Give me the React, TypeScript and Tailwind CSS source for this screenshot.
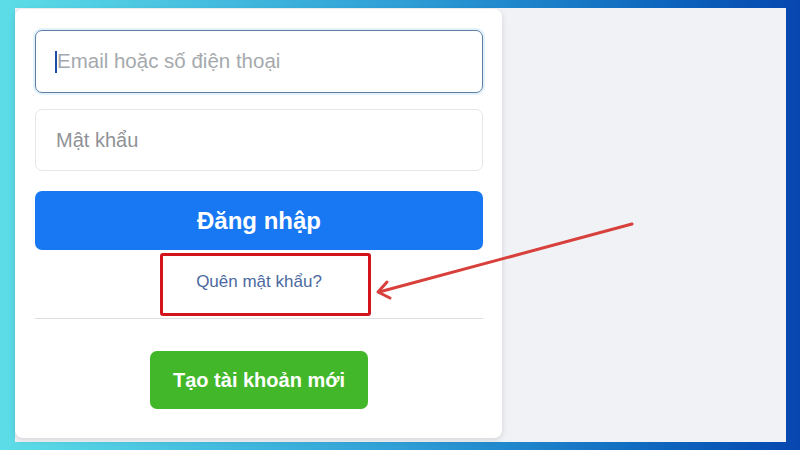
import React from 'react';

const font = { fontFamily: '"Liberation Sans", Arial, sans-serif' };

const LoginCard: React.FC = () => {
  return (
    <div className="relative w-[487px] mt-[1px] rounded-[8px] bg-white pt-[21px] pl-[20px] pr-[19px] shadow-[0_2px_6px_rgba(0,0,0,0.12)]">
      {/* Email input (focused) */}
      <div className="h-[63px] rounded-[7px] border border-[#5d7fa3] shadow-[0_0_0_2px_#e3f1fb] flex items-center pl-[19px]">
        <span className="w-[2px] h-[22px] bg-[#1d4ea3]" />
        <span className="text-[20.5px] text-[#a5a9ad]">Email hoặc số điện thoại</span>
      </div>

      {/* Password input */}
      <div className="mt-[16px] h-[62px] rounded-[7px] border border-[#e4e6e9] flex items-center pl-[20px]">
        <span className="text-[20px] text-[#8f9296]">Mật khẩu</span>
      </div>

      {/* Login button */}
      <button className="mt-[20px] w-full h-[59px] rounded-[7px] bg-[#1877f2] text-white text-[24px] font-bold">
        Đăng nhập
      </button>

      {/* Forgot password */}
      <div className="h-[68px] flex items-center justify-center pb-[4px]">
        <span className="text-[17px] text-[#4b69a0]">Quên mật khẩu?</span>
      </div>

      <div className="h-[1px] bg-[#dadde1]" />

      <div className="flex justify-center pt-[32px] pb-[29px]">
        <button className="w-[218px] h-[58px] rounded-[7px] bg-[#42b72a] text-white text-[20px] font-bold">
          Tạo tài khoản mới
        </button>
      </div>

      {/* annotation box */}
      <div className="absolute left-[145px] top-[244px] w-[211px] h-[63px] border-[3px] border-[#d3141d] rounded-[3px]" />
    </div>
  );
};

export default function App() {
  return (
    <div
      className="relative w-[800px] h-[450px] overflow-hidden bg-gradient-to-r from-[#5ddde7] via-[#2f9fd6] to-[#0846af] pl-[15px] pr-[14px] pt-[8px] pb-[8px]"
      style={font}
    >
      <div className="h-full bg-[#f0f2f5] flex items-start">
        <LoginCard />
      </div>

      {/* annotation arrow */}
      <svg className="absolute left-0 top-0" width="800" height="450" viewBox="0 0 800 450">
        <g stroke="#d8403c" strokeWidth="3" strokeLinecap="round" fill="none">
          <line x1="632" y1="224" x2="379" y2="292" />
          <polyline points="387,282 378,292 390,298" strokeLinejoin="round" />
        </g>
      </svg>
    </div>
  );
}
